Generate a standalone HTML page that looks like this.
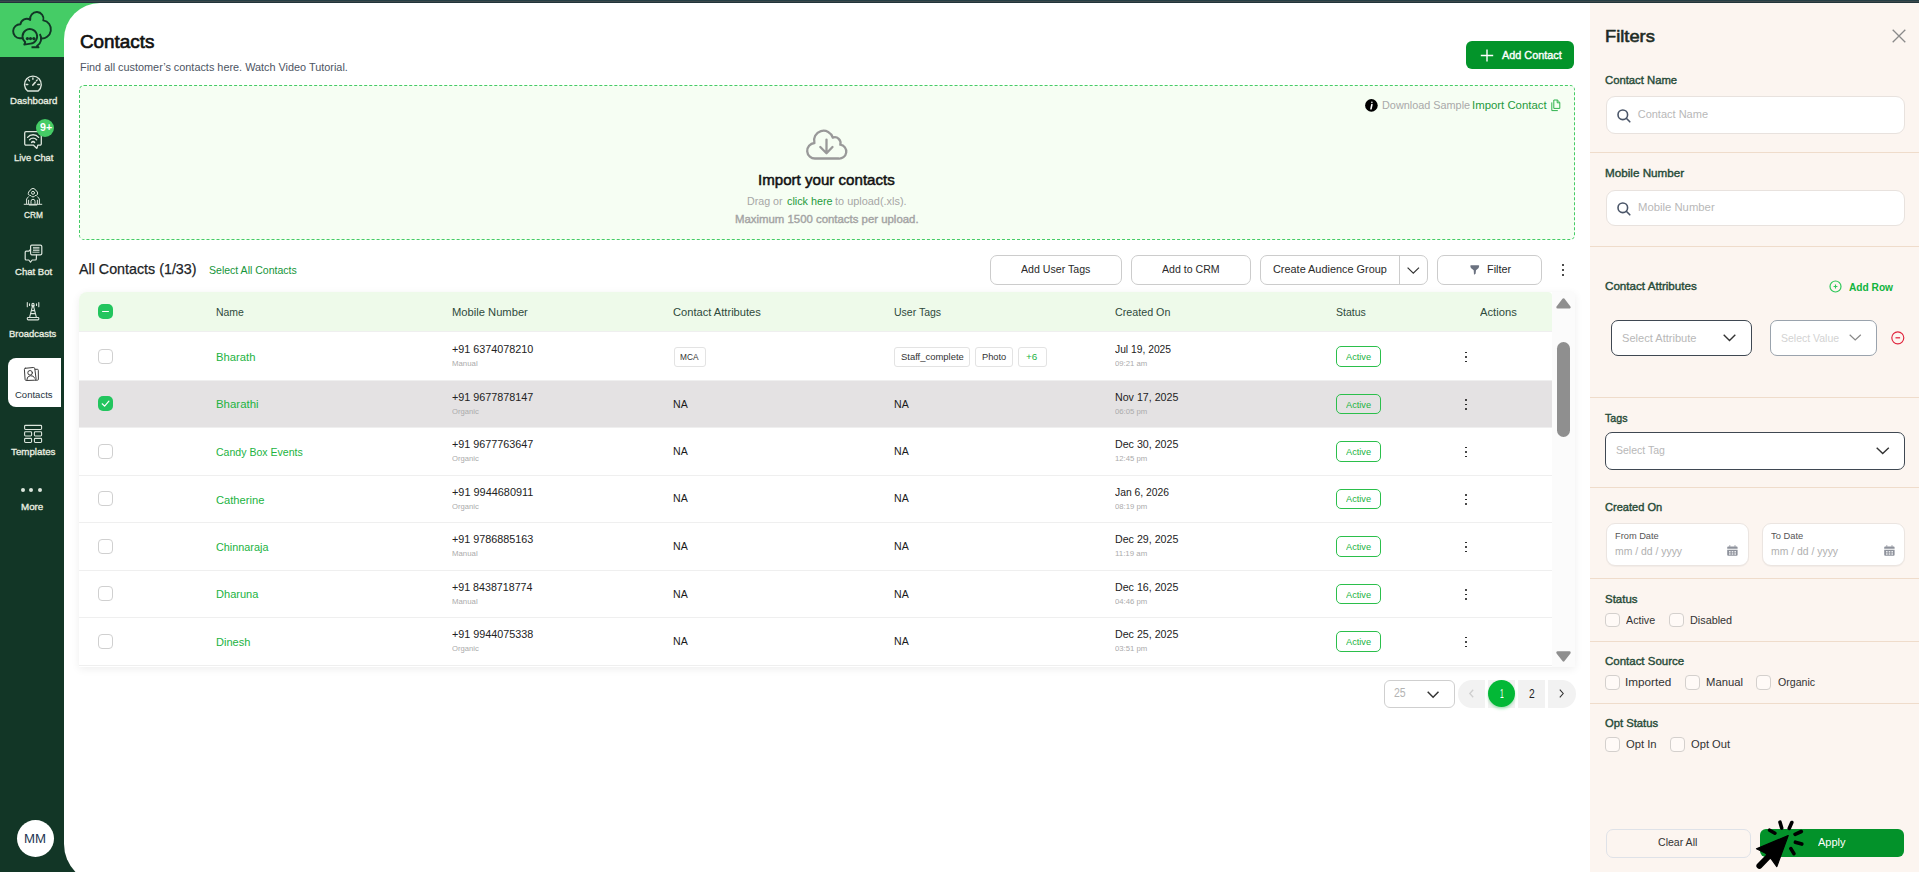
<!DOCTYPE html>
<html><head><meta charset="utf-8"><style>
html,body{margin:0;padding:0;}
body{width:1919px;height:872px;position:relative;overflow:hidden;background:#123626;font-family:"Liberation Sans",sans-serif;}
.t{position:absolute;white-space:nowrap;font-family:"Liberation Sans",sans-serif;}
svg{display:block}
</style></head><body>
<div style="position:absolute;left:0px;top:0px;width:1919px;height:1px;background:#263f45"></div><div style="position:absolute;left:0px;top:1px;width:1919px;height:1px;background:#3d494b"></div><div style="position:absolute;left:0px;top:2px;width:1919px;height:1px;background:#21343a"></div><div style="position:absolute;left:0px;top:3px;width:120px;height:54px;background:#45cc66"></div><div style="position:absolute;left:64px;top:3px;width:1526px;height:881px;background:#ffffff;border-top-left-radius:36px;border-bottom-left-radius:40px"></div><div style="position:absolute;left:1590px;top:3px;width:329px;height:869px;background:#fcf5f0"></div><div style="position:absolute;left:8px;top:358px;width:53px;height:49px;background:#ffffff;border-radius:8px 0 0 8px"></div><div style="position:absolute;left:17px;top:820px;width:37px;height:37px;background:#ffffff;border-radius:50%"></div><div style="position:absolute;left:1466px;top:41px;width:108px;height:28px;background:#03942a;border-radius:6px"></div><div style="position:absolute;left:79px;top:85px;width:1496px;height:155px;background:#f6fef3;border:1px dashed #45cc66;border-radius:5px;box-sizing:border-box"></div><div style="position:absolute;left:990px;top:255px;width:131.5px;height:29.5px;background:#fff;border:1px solid #cccccc;border-radius:7px;box-sizing:border-box"></div><div style="position:absolute;left:1131px;top:255px;width:119.5px;height:29.5px;background:#fff;border:1px solid #cccccc;border-radius:7px;box-sizing:border-box"></div><div style="position:absolute;left:1260px;top:255px;width:168px;height:29.5px;background:#fff;border:1px solid #cccccc;border-radius:7px;box-sizing:border-box"></div><div style="position:absolute;left:1437px;top:255px;width:105px;height:29.5px;background:#fff;border:1px solid #cccccc;border-radius:7px;box-sizing:border-box"></div><div style="position:absolute;left:1398.5px;top:255px;width:1.0px;height:29.5px;background:#cccccc"></div><div style="position:absolute;left:79px;top:291.5px;width:1496px;height:375.0px;background:#ffffff;border-radius:8px 2px 0 0;box-shadow:0 2px 9px rgba(0,0,0,0.07)"></div><div style="position:absolute;left:79px;top:291.5px;width:1473px;height:39.5px;background:#eefaea;border-radius:8px 4px 0 0"></div><div style="position:absolute;left:1552px;top:291.5px;width:23px;height:375.0px;background:#fbfbfb;border-radius:0 2px 0 0"></div><div style="position:absolute;left:79px;top:380px;width:1473px;height:47px;background:#e4e2e3"></div><div style="position:absolute;left:79px;top:331px;width:1473px;height:1px;background:#efefef"></div><div style="position:absolute;left:79px;top:380px;width:1473px;height:1px;background:#efefef"></div><div style="position:absolute;left:79px;top:427px;width:1473px;height:1px;background:#efefef"></div><div style="position:absolute;left:79px;top:475px;width:1473px;height:1px;background:#efefef"></div><div style="position:absolute;left:79px;top:522px;width:1473px;height:1px;background:#efefef"></div><div style="position:absolute;left:79px;top:570px;width:1473px;height:1px;background:#efefef"></div><div style="position:absolute;left:79px;top:617px;width:1473px;height:1px;background:#efefef"></div><div style="position:absolute;left:79px;top:665px;width:1473px;height:1px;background:#efefef"></div><div style="position:absolute;left:98px;top:304px;width:15px;height:15px;background:#22c55e;border-radius:5px"></div><div style="position:absolute;left:102.2px;top:310.7px;width:6.599999999999994px;height:1.1999999999999886px;background:#fff;border-radius:1px"></div><div style="position:absolute;left:98px;top:348.5px;width:15px;height:15.0px;background:#fff;border:1px solid #d0d0d0;border-radius:4px;box-sizing:border-box"></div><div style="position:absolute;left:1336px;top:346px;width:45px;height:20.5px;border:1.3px solid #2bbf4b;border-radius:5px;box-sizing:border-box"></div><div style="position:absolute;left:1465.05px;top:351.55px;width:1.900000000000091px;height:1.8999999999999773px;background:#111;border-radius:50%"></div><div style="position:absolute;left:1465.05px;top:356.05px;width:1.900000000000091px;height:1.8999999999999773px;background:#111;border-radius:50%"></div><div style="position:absolute;left:1465.05px;top:360.55px;width:1.900000000000091px;height:1.8999999999999773px;background:#111;border-radius:50%"></div><div style="position:absolute;left:98px;top:396.0px;width:15px;height:15.0px;background:#22c55e;border-radius:5px"></div><svg style="position:absolute;left:98px;top:396.0px;overflow:visible;" width="15" height="15" viewBox="0 0 15 15"><path d="M4.2 7.8 L6.6 10.1 L10.9 5.2" fill="none" stroke="#fff" stroke-width="1.2" stroke-linecap="round" stroke-linejoin="round"/></svg><div style="position:absolute;left:1336px;top:393.5px;width:45px;height:20.5px;border:1.3px solid #2bbf4b;border-radius:5px;box-sizing:border-box"></div><div style="position:absolute;left:1465.05px;top:399.05px;width:1.900000000000091px;height:1.8999999999999773px;background:#111;border-radius:50%"></div><div style="position:absolute;left:1465.05px;top:403.55px;width:1.900000000000091px;height:1.8999999999999773px;background:#111;border-radius:50%"></div><div style="position:absolute;left:1465.05px;top:408.05px;width:1.900000000000091px;height:1.8999999999999773px;background:#111;border-radius:50%"></div><div style="position:absolute;left:98px;top:443.5px;width:15px;height:15.0px;background:#fff;border:1px solid #d0d0d0;border-radius:4px;box-sizing:border-box"></div><div style="position:absolute;left:1336px;top:441px;width:45px;height:20.5px;border:1.3px solid #2bbf4b;border-radius:5px;box-sizing:border-box"></div><div style="position:absolute;left:1465.05px;top:446.55px;width:1.900000000000091px;height:1.8999999999999773px;background:#111;border-radius:50%"></div><div style="position:absolute;left:1465.05px;top:451.05px;width:1.900000000000091px;height:1.8999999999999773px;background:#111;border-radius:50%"></div><div style="position:absolute;left:1465.05px;top:455.55px;width:1.900000000000091px;height:1.8999999999999773px;background:#111;border-radius:50%"></div><div style="position:absolute;left:98px;top:491.0px;width:15px;height:15.0px;background:#fff;border:1px solid #d0d0d0;border-radius:4px;box-sizing:border-box"></div><div style="position:absolute;left:1336px;top:488.5px;width:45px;height:20.5px;border:1.3px solid #2bbf4b;border-radius:5px;box-sizing:border-box"></div><div style="position:absolute;left:1465.05px;top:494.05px;width:1.900000000000091px;height:1.8999999999999773px;background:#111;border-radius:50%"></div><div style="position:absolute;left:1465.05px;top:498.55px;width:1.900000000000091px;height:1.8999999999999773px;background:#111;border-radius:50%"></div><div style="position:absolute;left:1465.05px;top:503.05px;width:1.900000000000091px;height:1.8999999999999773px;background:#111;border-radius:50%"></div><div style="position:absolute;left:98px;top:538.5px;width:15px;height:15.0px;background:#fff;border:1px solid #d0d0d0;border-radius:4px;box-sizing:border-box"></div><div style="position:absolute;left:1336px;top:536px;width:45px;height:20.5px;border:1.3px solid #2bbf4b;border-radius:5px;box-sizing:border-box"></div><div style="position:absolute;left:1465.05px;top:541.55px;width:1.900000000000091px;height:1.900000000000091px;background:#111;border-radius:50%"></div><div style="position:absolute;left:1465.05px;top:546.05px;width:1.900000000000091px;height:1.900000000000091px;background:#111;border-radius:50%"></div><div style="position:absolute;left:1465.05px;top:550.55px;width:1.900000000000091px;height:1.900000000000091px;background:#111;border-radius:50%"></div><div style="position:absolute;left:98px;top:586.0px;width:15px;height:15.0px;background:#fff;border:1px solid #d0d0d0;border-radius:4px;box-sizing:border-box"></div><div style="position:absolute;left:1336px;top:583.5px;width:45px;height:20.5px;border:1.3px solid #2bbf4b;border-radius:5px;box-sizing:border-box"></div><div style="position:absolute;left:1465.05px;top:589.05px;width:1.900000000000091px;height:1.900000000000091px;background:#111;border-radius:50%"></div><div style="position:absolute;left:1465.05px;top:593.55px;width:1.900000000000091px;height:1.900000000000091px;background:#111;border-radius:50%"></div><div style="position:absolute;left:1465.05px;top:598.05px;width:1.900000000000091px;height:1.900000000000091px;background:#111;border-radius:50%"></div><div style="position:absolute;left:98px;top:633.5px;width:15px;height:15.0px;background:#fff;border:1px solid #d0d0d0;border-radius:4px;box-sizing:border-box"></div><div style="position:absolute;left:1336px;top:631px;width:45px;height:20.5px;border:1.3px solid #2bbf4b;border-radius:5px;box-sizing:border-box"></div><div style="position:absolute;left:1465.05px;top:636.55px;width:1.900000000000091px;height:1.900000000000091px;background:#111;border-radius:50%"></div><div style="position:absolute;left:1465.05px;top:641.05px;width:1.900000000000091px;height:1.900000000000091px;background:#111;border-radius:50%"></div><div style="position:absolute;left:1465.05px;top:645.55px;width:1.900000000000091px;height:1.900000000000091px;background:#111;border-radius:50%"></div><div style="position:absolute;left:673.5px;top:346.5px;width:32.0px;height:20.0px;background:#fff;border:1px solid #e3e3e3;border-radius:3px;box-sizing:border-box"></div><div style="position:absolute;left:894px;top:346.5px;width:75.5px;height:20.0px;background:#fff;border:1px solid #e3e3e3;border-radius:3px;box-sizing:border-box"></div><div style="position:absolute;left:974.5px;top:346.5px;width:38.0px;height:20.0px;background:#fff;border:1px solid #e3e3e3;border-radius:3px;box-sizing:border-box"></div><div style="position:absolute;left:1017.5px;top:346.5px;width:29.0px;height:20.0px;background:#fff;border:1px solid #e3e3e3;border-radius:3px;box-sizing:border-box"></div><div style="position:absolute;left:1557px;top:342px;width:13px;height:95px;background:#8f8f8f;border-radius:7px"></div><svg style="position:absolute;left:1556px;top:298px;overflow:visible;" width="15" height="11" viewBox="0 0 15 11"><path d="M7.5 1.6 L13.4 9.3 L1.6 9.3 Z" fill="#8f8f8f" stroke="#8f8f8f" stroke-width="2.6" stroke-linejoin="round"/></svg><svg style="position:absolute;left:1556px;top:650.5px;overflow:visible;" width="15" height="11" viewBox="0 0 15 11"><path d="M1.6 1.6 L13.4 1.6 L7.5 9.3 Z" fill="#8f8f8f" stroke="#8f8f8f" stroke-width="2.6" stroke-linejoin="round"/></svg><div style="position:absolute;left:1562.25px;top:264.05px;width:2.099999999999909px;height:2.1000000000000227px;background:#111;border-radius:50%"></div><div style="position:absolute;left:1562.25px;top:268.95px;width:2.099999999999909px;height:2.1000000000000227px;background:#111;border-radius:50%"></div><div style="position:absolute;left:1562.25px;top:273.84999999999997px;width:2.099999999999909px;height:2.1000000000000227px;background:#111;border-radius:50%"></div><div style="position:absolute;left:1383.5px;top:679.5px;width:71.5px;height:28.5px;background:#fff;border:1px solid #cfcfcf;border-radius:6px;box-sizing:border-box"></div><svg style="position:absolute;left:1426.8px;top:690.6px;overflow:visible;" width="12.2" height="7" viewBox="0 0 12.2 7"><path d="M0.7 0.7 L6.1 6.2 L11.5 0.7" fill="none" stroke="#333" stroke-width="1.5"/></svg><div style="position:absolute;left:1458px;top:680px;width:118px;height:28px;background:#f2f2f2;border-radius:14px"></div><div style="position:absolute;left:1485.3px;top:680px;width:3.0px;height:28px;background:#fff"></div><div style="position:absolute;left:1515px;top:680px;width:3px;height:28px;background:#fff"></div><div style="position:absolute;left:1545px;top:680px;width:3px;height:28px;background:#fff"></div><div style="position:absolute;left:1488px;top:680px;width:27px;height:27px;background:#03b836;border-radius:50%;box-shadow:0 2px 3px rgba(3,184,54,0.3)"></div><svg style="position:absolute;left:1468.5px;top:689px;overflow:visible;" width="5" height="9" viewBox="0 0 5 9"><path d="M4.2 0.7 L0.8 4.5 L4.2 8.3" fill="none" stroke="#cfcfcf" stroke-width="1.3"/></svg><svg style="position:absolute;left:1559px;top:689px;overflow:visible;" width="5" height="9" viewBox="0 0 5 9"><path d="M0.8 0.7 L4.2 4.5 L0.8 8.3" fill="none" stroke="#333" stroke-width="1.1"/></svg><div style="position:absolute;left:1590px;top:152px;width:329px;height:1px;background:#efdccb"></div><div style="position:absolute;left:1590px;top:245.5px;width:329px;height:1.0px;background:#efdccb"></div><div style="position:absolute;left:1590px;top:397px;width:329px;height:1px;background:#efdccb"></div><div style="position:absolute;left:1590px;top:487px;width:329px;height:1px;background:#efdccb"></div><div style="position:absolute;left:1590px;top:578px;width:329px;height:1px;background:#efdccb"></div><div style="position:absolute;left:1590px;top:641px;width:329px;height:1px;background:#efdccb"></div><div style="position:absolute;left:1590px;top:703px;width:329px;height:1px;background:#efdccb"></div><div style="position:absolute;left:1605.5px;top:96px;width:299.0px;height:37.5px;background:#fff;border:1px solid #e8e2de;border-radius:9px;box-sizing:border-box"></div><div style="position:absolute;left:1605.5px;top:189.5px;width:299.0px;height:36.0px;background:#fff;border:1px solid #e8e2de;border-radius:9px;box-sizing:border-box"></div><div style="position:absolute;left:1611px;top:320px;width:141px;height:36px;background:#fff;border:1.3px solid #3f4852;border-radius:7px;box-sizing:border-box"></div><div style="position:absolute;left:1770px;top:320px;width:106.5px;height:36px;background:#fff;border:1px solid #9aa3ad;border-radius:7px;box-sizing:border-box"></div><div style="position:absolute;left:1605px;top:432px;width:300px;height:37.5px;background:#fff;border:1.3px solid #3f4852;border-radius:7px;box-sizing:border-box"></div><div style="position:absolute;left:1605.5px;top:523px;width:143.0px;height:43px;background:#fff;border:1px solid #ebe5e1;border-radius:9px;box-sizing:border-box;box-shadow:0 1px 1px rgba(0,0,0,0.04)"></div><div style="position:absolute;left:1761.5px;top:523px;width:143.0px;height:43px;background:#fff;border:1px solid #ebe5e1;border-radius:9px;box-sizing:border-box;box-shadow:0 1px 1px rgba(0,0,0,0.04)"></div><div style="position:absolute;left:1605px;top:612.5px;width:14.5px;height:14.5px;background:#fffaf7;border:1px solid #d4d0cd;border-radius:4px;box-sizing:border-box"></div><div style="position:absolute;left:1669.3px;top:612.5px;width:14.5px;height:14.5px;background:#fffaf7;border:1px solid #d4d0cd;border-radius:4px;box-sizing:border-box"></div><div style="position:absolute;left:1605px;top:675px;width:14.5px;height:14.5px;background:#fffaf7;border:1px solid #d4d0cd;border-radius:4px;box-sizing:border-box"></div><div style="position:absolute;left:1685.3px;top:675px;width:14.5px;height:14.5px;background:#fffaf7;border:1px solid #d4d0cd;border-radius:4px;box-sizing:border-box"></div><div style="position:absolute;left:1756.3px;top:675px;width:14.5px;height:14.5px;background:#fffaf7;border:1px solid #d4d0cd;border-radius:4px;box-sizing:border-box"></div><div style="position:absolute;left:1605px;top:737px;width:14.5px;height:14.5px;background:#fffaf7;border:1px solid #d4d0cd;border-radius:4px;box-sizing:border-box"></div><div style="position:absolute;left:1670px;top:737px;width:14.5px;height:14.5px;background:#fffaf7;border:1px solid #d4d0cd;border-radius:4px;box-sizing:border-box"></div><div style="position:absolute;left:1605.5px;top:828.5px;width:145.0px;height:29.0px;border:1px solid #dfe2e8;border-radius:7px;box-sizing:border-box"></div><div style="position:absolute;left:1759.5px;top:829px;width:144.5px;height:28px;background:#03922a;border-radius:6px"></div><svg style="position:absolute;left:8px;top:8px;overflow:visible;" width="48" height="44" viewBox="0 0 48 44"><g fill="none" stroke="#123626" stroke-width="1.9" stroke-linejoin="round">
<path d="M15.2 30.3 L11.9 30.3 A6.9 6.9 0 0 1 12.4 16.3 A6.4 6.4 0 0 1 22.2 11.9 A6.7 6.7 0 1 1 35.3 12.4 A8.5 8.5 0 0 1 32.4 30.3"/>
<path d="M17.2 34.0 A7.3 7.3 0 1 1 22.5 35.6 L16.3 36.6 Z"/>
<path d="M31.8 26.0 A8.5 8.5 0 0 1 29.0 38.0 L30.5 39.3 L23.5 39.3"/>
</g>
<g fill="#123626"><circle cx="19.4" cy="30.6" r="1.6"/><circle cx="22.5" cy="30.6" r="1.6"/><circle cx="25.8" cy="30.6" r="1.6"/></g></svg><svg style="position:absolute;left:20px;top:70px;overflow:visible;" width="28" height="26" viewBox="0 0 28 26"><g fill="none" stroke="#dce5dc" stroke-width="1.4" stroke-linecap="round">
<path d="M7.6 21.0 A8.4 8.4 0 1 1 18.2 21.0 Z" stroke-linejoin="round"/>
<path d="M6.2 14.5 L7.8 14.5 M17.8 14.5 L19.4 14.5 M12.9 8.0 L12.9 9.2 M8.5 9.8 L9.5 10.7 M17.2 10.0 L16.4 10.7"/>
<path d="M12.9 15.0 L15.3 12.3" stroke-width="1.7"/>
</g></svg><svg style="position:absolute;left:20px;top:116px;overflow:visible;" width="38" height="36" viewBox="0 0 38 36"><g fill="none" stroke="#dce5dc" stroke-width="1.3" stroke-linecap="round" stroke-linejoin="round">
<path d="M6.0 15.7 L20.0 15.7 A1.3 1.3 0 0 1 21.3 17.0 L21.3 27.8 A1.3 1.3 0 0 1 20.0 29.1 L17.8 29.1 L16.9 32.4 L13.3 29.1 L6.0 29.1 A1.3 1.3 0 0 1 4.7 27.8 L4.7 17.0 A1.3 1.3 0 0 1 6.0 15.7 Z"/>
<path d="M7.6 21.4 A7 7 0 0 1 18.6 21.4"/>
<path d="M9.5 23.8 A4.6 4.6 0 0 1 16.7 23.8"/>
<path d="M11.7 26.4 A1.7 1.7 0 0 1 14.5 26.4" stroke-width="1.6"/>
</g></svg><div style="position:absolute;left:36px;top:119px;width:18px;height:18px;background:#45cc66;border-radius:50%"></div><svg style="position:absolute;left:20px;top:184px;overflow:visible;" width="26" height="26" viewBox="0 0 26 26"><g fill="none" stroke="#dce5dc" stroke-width="1.0" stroke-linecap="round" stroke-linejoin="round">
<path d="M8.4 9.0 L8.9 7.4 L10.2 6.6 L11.2 5.0 L13 4.4 L14.8 5.0 L15.8 6.6 L17.1 7.4 L17.6 9.0 L17.4 10.6 L16.2 11.4 L15.0 11.6 A2.2 2.2 0 0 1 11.0 11.6 L9.8 11.4 L8.6 10.6 Z"/>
<circle cx="13" cy="8.8" r="1.5"/>
<path d="M6.6 19.6 L6.6 15.0 L8.4 12.8 M8.6 19.6 L8.6 16.2 M19.4 19.6 L19.4 15.0 L17.6 12.8 M17.4 19.6 L17.4 16.2"/>
<path d="M11.0 19.4 L11.0 17.3 A2 2 0 0 1 15.0 17.3 L15.0 19.4"/>
<path d="M4.2 20.3 L21.8 20.3"/>
<path d="M9.4 20.9 L16.6 20.9" stroke-width="1.3"/>
</g></svg><svg style="position:absolute;left:20px;top:240px;overflow:visible;" width="26" height="26" viewBox="0 0 26 26"><g fill="none" stroke="#dce5dc" stroke-width="1.2" stroke-linecap="round" stroke-linejoin="round">
<path d="M11.7 5.2 L20.4 5.2 A1.4 1.4 0 0 1 21.8 6.6 L21.8 13.4 A1.4 1.4 0 0 1 20.4 14.8 L16.5 14.8 L16.3 19.0 A1 1 0 0 1 15.3 20 L12.2 20 L10.5 22.2 L8.8 20 L6.2 20 A1 1 0 0 1 5.2 19 L5.2 12.2 A1 1 0 0 1 6.2 11.2 L8.8 11.2 L10.6 9.5 L10.6 6.3 A1.1 1.1 0 0 1 11.7 5.2 Z"/>
<path d="M10.6 9.5 L10.6 13.6 A1.2 1.2 0 0 0 11.8 14.8 L16.5 14.8"/>
<path d="M13.4 7.4 L19.1 7.4 M13.4 8.9 L19.1 8.9 M13.4 10.4 L19.1 10.4 M12.8 12.2 L19.1 12.2" stroke-width="0.9"/>
</g></svg><svg style="position:absolute;left:20px;top:298px;overflow:visible;" width="26" height="26" viewBox="0 0 26 26"><g fill="none" stroke="#dce5dc" stroke-width="1.1" stroke-linecap="round" stroke-linejoin="round">
<path d="M7.3 4.5 L7.3 8.8 M18.8 4.5 L18.8 8.8 M9.5 5.7 L9.5 7.5 M16.5 5.7 L16.5 7.5"/>
<circle cx="13" cy="6.5" r="1.1"/>
<path d="M11.8 7.6 L12.4 8.6 L13.6 8.6 L14.2 7.6" />
<path d="M12.3 8.8 L9.6 19.3 M13.7 8.8 L16.4 19.3 M11.3 12.6 L14.7 12.6 M10.5 15.6 L15.5 15.6"/>
<rect x="7.3" y="19.5" width="11.5" height="2.4" rx="0.8"/>
</g></svg><svg style="position:absolute;left:18px;top:362px;overflow:visible;" width="26" height="26" viewBox="0 0 26 26"><g fill="none" stroke="#3a3a3a" stroke-width="1.0" stroke-linecap="round" stroke-linejoin="round">
<path d="M17.3 7.3 L19.4 7.3 A0.9 0.9 0 0 1 20.3 8.2 L20.4 17.3 A0.9 0.9 0 0 1 19.5 18.2 L17.5 18.2"/>
<path d="M7.2 6.3 L15.3 5.5 A1.4 1.4 0 0 1 16.8 6.8 L18.1 16.8 A1.3 1.3 0 0 1 16.8 18.2 L8.2 18.5 A1.2 1.2 0 0 1 7.1 17.5 L6.4 7.5 A1.2 1.2 0 0 1 7.2 6.3 Z"/>
<circle cx="12.1" cy="10.8" r="2.3"/>
<path d="M8.8 17.8 A4.2 4.2 0 0 1 16.9 16.3"/>
</g></svg><svg style="position:absolute;left:20px;top:420px;overflow:visible;" width="26" height="26" viewBox="0 0 26 26"><g fill="none" stroke="#dce5dc" stroke-width="1.1">
<rect x="4.6" y="5.4" width="17" height="4.1" rx="0.9"/>
<rect x="4.6" y="11.8" width="7" height="4.2" rx="0.9"/>
<rect x="14.4" y="11.8" width="7.2" height="4.2" rx="0.9"/>
<rect x="4.6" y="18.4" width="7" height="4.1" rx="0.9"/>
<rect x="14.4" y="18.4" width="7.2" height="4.1" rx="0.9"/>
</g></svg><div style="position:absolute;left:21px;top:488px;width:4px;height:4px;background:#dce5dc;border-radius:50%"></div><div style="position:absolute;left:29.2px;top:488px;width:4.0000000000000036px;height:4px;background:#dce5dc;border-radius:50%"></div><div style="position:absolute;left:37.6px;top:488px;width:4.0px;height:4px;background:#dce5dc;border-radius:50%"></div><svg style="position:absolute;left:1480px;top:48.5px;overflow:visible;" width="14" height="13" viewBox="0 0 14 13"><path d="M7 0.5 L7 12.5 M0.8 6.5 L13.2 6.5" stroke="#fff" stroke-width="1.4"/></svg><svg style="position:absolute;left:1365px;top:99px;overflow:visible;" width="13" height="13" viewBox="0 0 13 13"><circle cx="6.4" cy="6.4" r="6.3" fill="#000"/><path d="M6.9 3.2 L6.9 3.3 M6.9 5.5 L6.0 9.8" stroke="#fff" stroke-width="1.6" stroke-linecap="round"/></svg><svg style="position:absolute;left:1550px;top:98.5px;overflow:visible;" width="12" height="13" viewBox="0 0 12 13"><g fill="none" stroke="#2fb24e" stroke-width="1"><path d="M3.8 1.0 L7.4 1.0 L9.8 3.4 L9.8 9.4 L3.8 9.4 Z"/><path d="M1.8 3.4 L1.8 11.6 L7.8 11.6"/><path d="M7.2 1.0 L7.2 3.8 L9.8 3.8"/></g></svg><svg style="position:absolute;left:800px;top:122px;overflow:visible;" width="52" height="44" viewBox="0 0 52 44"><g fill="none" stroke="#999" stroke-width="2.3" stroke-linecap="round" stroke-linejoin="round">
<path d="M15.5 36.5 A7.2 7.2 0 0 1 14.4 21.0 A9.3 9.3 0 0 1 32.8 15.6 A5.8 5.8 0 0 1 40.3 22.7 A6.7 6.7 0 0 1 38.3 36.5 Z"/>
<path d="M26.5 17.6 L26.5 31.0 M20.3 25.0 L26.5 31.2 L32.5 25.0"/>
</g></svg><svg style="position:absolute;left:1406.5px;top:266.5px;overflow:visible;" width="13" height="7" viewBox="0 0 13 7"><path d="M0.6 0.6 L6.3 6.2 L12 0.6" fill="none" stroke="#333" stroke-width="1.2"/></svg><svg style="position:absolute;left:1469.5px;top:264.8px;overflow:visible;" width="10" height="10" viewBox="0 0 10 10"><path d="M0.3 1.1 A0.8 0.8 0 0 1 1.1 0.2 L8.4 0.2 A0.8 0.8 0 0 1 9.2 1.1 L8.6 2.9 L6.0 5.2 L5.6 8.8 L4.0 9.8 L3.7 5.3 L0.9 2.9 Z" fill="#6b7280"/></svg><svg style="position:absolute;left:1892px;top:29px;overflow:visible;" width="14" height="14" viewBox="0 0 14 14"><path d="M0.7 0.7 L13.3 13.3 M13.3 0.7 L0.7 13.3" stroke="#8a8a8a" stroke-width="1.3"/></svg><svg style="position:absolute;left:1616px;top:107.5px;overflow:visible;" width="16" height="15" viewBox="0 0 16 15"><g fill="none" stroke="#4a5568" stroke-width="1.6" stroke-linecap="round"><circle cx="6.8" cy="6.8" r="4.8"/><path d="M10.3 10.3 L13.8 13.8"/></g></svg><svg style="position:absolute;left:1616px;top:200.5px;overflow:visible;" width="16" height="15" viewBox="0 0 16 15"><g fill="none" stroke="#4a5568" stroke-width="1.6" stroke-linecap="round"><circle cx="6.8" cy="6.8" r="4.8"/><path d="M10.3 10.3 L13.8 13.8"/></g></svg><svg style="position:absolute;left:1829px;top:280.3px;overflow:visible;" width="13" height="13" viewBox="0 0 13 13"><g fill="none" stroke="#2ec85a" stroke-width="1.2"><circle cx="6.5" cy="6.5" r="5.5"/></g><path d="M6.5 4.6 L6.5 8.4 M4.6 6.5 L8.4 6.5" stroke="#2ec85a" stroke-width="1.1"/></svg><svg style="position:absolute;left:1890.5px;top:331.3px;overflow:visible;" width="14" height="14" viewBox="0 0 14 14"><circle cx="6.8" cy="6.8" r="6" fill="none" stroke="#e0243d" stroke-width="1.15"/><path d="M4.5 6.8 L9.1 6.8" stroke="#e0243d" stroke-width="1.25"/></svg><svg style="position:absolute;left:1723.3px;top:333.5px;overflow:visible;" width="13" height="7.5" viewBox="0 0 13 7.5"><path d="M0.7 0.7 L6.5 6.5 L12.3 0.7" fill="none" stroke="#333" stroke-width="1.4"/></svg><svg style="position:absolute;left:1848.8px;top:334px;overflow:visible;" width="12.5" height="7" viewBox="0 0 12.5 7"><path d="M0.7 0.7 L6.2 6.0 L11.8 0.7" fill="none" stroke="#888" stroke-width="1.2"/></svg><svg style="position:absolute;left:1876px;top:447px;overflow:visible;" width="13.5" height="7.5" viewBox="0 0 13.5 7.5"><path d="M0.7 0.7 L6.7 6.5 L12.8 0.7" fill="none" stroke="#333" stroke-width="1.4"/></svg><svg style="position:absolute;left:1727.2px;top:545px;overflow:visible;" width="11" height="11" viewBox="0 0 11 11"><path d="M1.2 1.6 L9.6 1.6 A1 1 0 0 1 10.6 2.6 L10.6 3.8 L0.2 3.8 L0.2 2.6 A1 1 0 0 1 1.2 1.6 Z M0.2 4.8 L10.6 4.8 L10.6 9.8 A1 1 0 0 1 9.6 10.8 L1.2 10.8 A1 1 0 0 1 0.2 9.8 Z" fill="#8e929c"/><path d="M2.8 0.2 L2.8 1.8 M8.0 0.2 L8.0 1.8" stroke="#8e929c" stroke-width="0.9"/><g fill="#fff"><rect x="2" y="6.2" width="1.6" height="1.2"/><rect x="4.7" y="6.2" width="1.6" height="1.2"/><rect x="7.4" y="6.2" width="1.6" height="1.2"/><rect x="2" y="8.4" width="1.6" height="1.2"/><rect x="4.7" y="8.4" width="1.6" height="1.2"/><rect x="7.4" y="8.4" width="1.6" height="1.2"/></g></svg><svg style="position:absolute;left:1883.5px;top:545px;overflow:visible;" width="11" height="11" viewBox="0 0 11 11"><path d="M1.2 1.6 L9.6 1.6 A1 1 0 0 1 10.6 2.6 L10.6 3.8 L0.2 3.8 L0.2 2.6 A1 1 0 0 1 1.2 1.6 Z M0.2 4.8 L10.6 4.8 L10.6 9.8 A1 1 0 0 1 9.6 10.8 L1.2 10.8 A1 1 0 0 1 0.2 9.8 Z" fill="#8e929c"/><path d="M2.8 0.2 L2.8 1.8 M8.0 0.2 L8.0 1.8" stroke="#8e929c" stroke-width="0.9"/><g fill="#fff"><rect x="2" y="6.2" width="1.6" height="1.2"/><rect x="4.7" y="6.2" width="1.6" height="1.2"/><rect x="7.4" y="6.2" width="1.6" height="1.2"/><rect x="2" y="8.4" width="1.6" height="1.2"/><rect x="4.7" y="8.4" width="1.6" height="1.2"/><rect x="7.4" y="8.4" width="1.6" height="1.2"/></g></svg>
<div class="t" style="left:9.90px;top:96.00px;font-size:9.5px;line-height:9.5px;color:#e9eee0;font-weight:normal;transform:scaleX(1.0175);transform-origin:0 0;-webkit-text-stroke:0.32px #e9eee0;">Dashboard</div><div class="t" style="left:13.95px;top:153.00px;font-size:9.5px;line-height:9.5px;color:#e9eee0;font-weight:normal;transform:scaleX(0.9804);transform-origin:0 0;-webkit-text-stroke:0.32px #e9eee0;">Live Chat</div><div class="t" style="left:24.00px;top:210.00px;font-size:9.5px;line-height:9.5px;color:#e9eee0;font-weight:normal;transform:scaleX(0.8747);transform-origin:0 0;-webkit-text-stroke:0.32px #e9eee0;">CRM</div><div class="t" style="left:14.75px;top:267.00px;font-size:9.5px;line-height:9.5px;color:#e9eee0;font-weight:normal;transform:scaleX(1.0047);transform-origin:0 0;-webkit-text-stroke:0.32px #e9eee0;">Chat Bot</div><div class="t" style="left:9.45px;top:329.00px;font-size:9.5px;line-height:9.5px;color:#e9eee0;font-weight:normal;transform:scaleX(0.9943);transform-origin:0 0;-webkit-text-stroke:0.32px #e9eee0;">Broadcasts</div><div class="t" style="left:14.65px;top:390.00px;font-size:9.7px;line-height:9.7px;color:#1d3340;font-weight:normal;transform:scaleX(0.9821);transform-origin:0 0;">Contacts</div><div class="t" style="left:11.25px;top:447.00px;font-size:9.5px;line-height:9.5px;color:#e9eee0;font-weight:normal;transform:scaleX(1.0265);transform-origin:0 0;-webkit-text-stroke:0.32px #e9eee0;">Templates</div><div class="t" style="left:21.00px;top:502.00px;font-size:9.5px;line-height:9.5px;color:#e9eee0;font-weight:normal;transform:scaleX(1.0299);transform-origin:0 0;-webkit-text-stroke:0.32px #e9eee0;">More</div><div class="t" style="left:24.20px;top:833.00px;font-size:12px;line-height:12px;color:#1c3550;font-weight:normal;transform:scaleX(1.1002);transform-origin:0 0;">MM</div><div class="t" style="left:39.70px;top:122.00px;font-size:10.5px;line-height:10.5px;color:#ffffff;font-weight:bold;transform:scaleX(1.0135);transform-origin:0 0;">9+</div><div class="t" style="left:79.50px;top:33.00px;font-size:18px;line-height:18px;color:#111111;font-weight:normal;transform:scaleX(1.0474);transform-origin:0 0;-webkit-text-stroke:0.61px #111111;">Contacts</div><div class="t" style="left:79.50px;top:62.00px;font-size:11px;line-height:11px;color:#4d5563;font-weight:normal;transform:scaleX(0.9882);transform-origin:0 0;">Find all customer’s contacts here. Watch Video Tutorial.</div><div class="t" style="left:1502.00px;top:50.00px;font-size:11px;line-height:11px;color:#ffffff;font-weight:normal;transform:scaleX(0.9854);transform-origin:0 0;-webkit-text-stroke:0.37px #ffffff;">Add Contact</div><div class="t" style="left:1382.00px;top:100.00px;font-size:11px;line-height:11px;color:#a9a9a9;font-weight:normal;transform:scaleX(0.9870);transform-origin:0 0;">Download Sample</div><div class="t" style="left:1472.47px;top:100.00px;font-size:11px;line-height:11px;color:#1f9a3c;font-weight:normal;transform:scaleX(1.0340);transform-origin:0 0;">Import Contact</div><div class="t" style="left:758.21px;top:173.00px;font-size:14.5px;line-height:14.5px;color:#111111;font-weight:normal;transform:scaleX(1.0415);transform-origin:0 0;-webkit-text-stroke:0.49px #111111;">Import your contacts</div><div class="t" style="left:747.20px;top:196.00px;font-size:11px;line-height:11px;color:#a6a6a6;font-weight:normal;transform:scaleX(0.9698);transform-origin:0 0;">Drag or</div><div class="t" style="left:786.50px;top:196.00px;font-size:11px;line-height:11px;color:#1f9a3c;font-weight:normal;transform:scaleX(0.9818);transform-origin:0 0;">click here</div><div class="t" style="left:835.00px;top:196.00px;font-size:11px;line-height:11px;color:#a6a6a6;font-weight:normal;transform:scaleX(0.9918);transform-origin:0 0;">to upload(.xls).</div><div class="t" style="left:735.25px;top:214.00px;font-size:11px;line-height:11px;color:#a3a3a3;font-weight:normal;transform:scaleX(1.0352);transform-origin:0 0;-webkit-text-stroke:0.37px #a3a3a3;">Maximum 1500 contacts per upload.</div><div class="t" style="left:78.70px;top:261.00px;font-size:15px;line-height:15px;color:#1c2326;font-weight:normal;transform:scaleX(0.9523);transform-origin:0 0;-webkit-text-stroke:0.25px #1c2326;">All Contacts (1/33)</div><div class="t" style="left:208.60px;top:265.00px;font-size:11.5px;line-height:11.5px;color:#16953a;font-weight:normal;transform:scaleX(0.9156);transform-origin:0 0;">Select All Contacts</div><div class="t" style="left:1021.00px;top:264.00px;font-size:11px;line-height:11px;color:#2a2a2a;font-weight:normal;transform:scaleX(0.9636);transform-origin:0 0;">Add User Tags</div><div class="t" style="left:1161.75px;top:264.00px;font-size:11px;line-height:11px;color:#2a2a2a;font-weight:normal;transform:scaleX(0.9624);transform-origin:0 0;">Add to CRM</div><div class="t" style="left:1272.65px;top:264.00px;font-size:11px;line-height:11px;color:#2a2a2a;font-weight:normal;transform:scaleX(0.9900);transform-origin:0 0;">Create Audience Group</div><div class="t" style="left:1486.80px;top:264.00px;font-size:11px;line-height:11px;color:#2a2a2a;font-weight:normal;transform:scaleX(0.9887);transform-origin:0 0;">Filter</div><div class="t" style="left:216.00px;top:307.00px;font-size:11.5px;line-height:11.5px;color:#2e4a3c;font-weight:normal;transform:scaleX(0.9082);transform-origin:0 0;">Name</div><div class="t" style="left:452.00px;top:307.00px;font-size:11.5px;line-height:11.5px;color:#2e4a3c;font-weight:normal;transform:scaleX(0.9726);transform-origin:0 0;">Mobile Number</div><div class="t" style="left:673.00px;top:307.00px;font-size:11.5px;line-height:11.5px;color:#2e4a3c;font-weight:normal;transform:scaleX(0.9678);transform-origin:0 0;">Contact Attributes</div><div class="t" style="left:894.00px;top:307.00px;font-size:11.5px;line-height:11.5px;color:#2e4a3c;font-weight:normal;transform:scaleX(0.9132);transform-origin:0 0;">User Tags</div><div class="t" style="left:1115.00px;top:307.00px;font-size:11.5px;line-height:11.5px;color:#2e4a3c;font-weight:normal;transform:scaleX(0.9314);transform-origin:0 0;">Created On</div><div class="t" style="left:1336.00px;top:307.00px;font-size:11.5px;line-height:11.5px;color:#2e4a3c;font-weight:normal;transform:scaleX(0.9132);transform-origin:0 0;">Status</div><div class="t" style="left:1480.00px;top:307.00px;font-size:11.5px;line-height:11.5px;color:#2e4a3c;font-weight:normal;transform:scaleX(0.9747);transform-origin:0 0;">Actions</div><div class="t" style="left:216.00px;top:352.00px;font-size:11.5px;line-height:11.5px;color:#22b33f;font-weight:normal;transform:scaleX(0.9779);transform-origin:0 0;">Bharath</div><div class="t" style="left:452.00px;top:344.00px;font-size:11.5px;line-height:11.5px;color:#222222;font-weight:normal;transform:scaleX(0.9390);transform-origin:0 0;">+91 6374078210</div><div class="t" style="left:452.00px;top:360.00px;font-size:7.5px;line-height:7.5px;color:#ababab;font-weight:normal;transform:scaleX(1.0428);transform-origin:0 0;">Manual</div><div class="t" style="left:1115.00px;top:344.00px;font-size:11.5px;line-height:11.5px;color:#222222;font-weight:normal;transform:scaleX(0.8946);transform-origin:0 0;">Jul 19, 2025</div><div class="t" style="left:1115.00px;top:360.00px;font-size:7.5px;line-height:7.5px;color:#ababab;font-weight:normal;transform:scaleX(1.0315);transform-origin:0 0;">09:21 am</div><div class="t" style="left:1346.00px;top:352.00px;font-size:9.5px;line-height:9.5px;color:#22b33f;font-weight:normal;transform:scaleX(0.9693);transform-origin:0 0;">Active</div><div class="t" style="left:216.00px;top:399.00px;font-size:11.5px;line-height:11.5px;color:#22b33f;font-weight:normal;transform:scaleX(0.9934);transform-origin:0 0;">Bharathi</div><div class="t" style="left:452.00px;top:392.00px;font-size:11.5px;line-height:11.5px;color:#222222;font-weight:normal;transform:scaleX(0.9390);transform-origin:0 0;">+91 9677878147</div><div class="t" style="left:452.00px;top:408.00px;font-size:7.5px;line-height:7.5px;color:#ababab;font-weight:normal;transform:scaleX(1.0184);transform-origin:0 0;">Organic</div><div class="t" style="left:1115.00px;top:392.00px;font-size:11.5px;line-height:11.5px;color:#222222;font-weight:normal;transform:scaleX(0.9263);transform-origin:0 0;">Nov 17, 2025</div><div class="t" style="left:1115.00px;top:408.00px;font-size:7.5px;line-height:7.5px;color:#ababab;font-weight:normal;transform:scaleX(1.0315);transform-origin:0 0;">06:05 pm</div><div class="t" style="left:673.00px;top:399.00px;font-size:11.5px;line-height:11.5px;color:#1a1a1a;font-weight:normal;transform:scaleX(0.9200);transform-origin:0 0;">NA</div><div class="t" style="left:894.00px;top:399.00px;font-size:11.5px;line-height:11.5px;color:#1a1a1a;font-weight:normal;transform:scaleX(0.9200);transform-origin:0 0;">NA</div><div class="t" style="left:1346.00px;top:400.00px;font-size:9.5px;line-height:9.5px;color:#22b33f;font-weight:normal;transform:scaleX(0.9693);transform-origin:0 0;">Active</div><div class="t" style="left:216.00px;top:447.00px;font-size:11.5px;line-height:11.5px;color:#22b33f;font-weight:normal;transform:scaleX(0.9172);transform-origin:0 0;">Candy Box Events</div><div class="t" style="left:452.00px;top:439.00px;font-size:11.5px;line-height:11.5px;color:#222222;font-weight:normal;transform:scaleX(0.9390);transform-origin:0 0;">+91 9677763647</div><div class="t" style="left:452.00px;top:455.00px;font-size:7.5px;line-height:7.5px;color:#ababab;font-weight:normal;transform:scaleX(1.0184);transform-origin:0 0;">Organic</div><div class="t" style="left:1115.00px;top:439.00px;font-size:11.5px;line-height:11.5px;color:#222222;font-weight:normal;transform:scaleX(0.9263);transform-origin:0 0;">Dec 30, 2025</div><div class="t" style="left:1115.00px;top:455.00px;font-size:7.5px;line-height:7.5px;color:#ababab;font-weight:normal;transform:scaleX(1.0315);transform-origin:0 0;">12:45 pm</div><div class="t" style="left:673.00px;top:446.00px;font-size:11.5px;line-height:11.5px;color:#1a1a1a;font-weight:normal;transform:scaleX(0.9200);transform-origin:0 0;">NA</div><div class="t" style="left:894.00px;top:446.00px;font-size:11.5px;line-height:11.5px;color:#1a1a1a;font-weight:normal;transform:scaleX(0.9200);transform-origin:0 0;">NA</div><div class="t" style="left:1346.00px;top:447.00px;font-size:9.5px;line-height:9.5px;color:#22b33f;font-weight:normal;transform:scaleX(0.9693);transform-origin:0 0;">Active</div><div class="t" style="left:216.00px;top:495.00px;font-size:11.5px;line-height:11.5px;color:#22b33f;font-weight:normal;transform:scaleX(0.9703);transform-origin:0 0;">Catherine</div><div class="t" style="left:452.00px;top:487.00px;font-size:11.5px;line-height:11.5px;color:#222222;font-weight:normal;transform:scaleX(0.9484);transform-origin:0 0;">+91 9944680911</div><div class="t" style="left:452.00px;top:503.00px;font-size:7.5px;line-height:7.5px;color:#ababab;font-weight:normal;transform:scaleX(1.0184);transform-origin:0 0;">Organic</div><div class="t" style="left:1115.00px;top:487.00px;font-size:11.5px;line-height:11.5px;color:#222222;font-weight:normal;transform:scaleX(0.8994);transform-origin:0 0;">Jan 6, 2026</div><div class="t" style="left:1115.00px;top:503.00px;font-size:7.5px;line-height:7.5px;color:#ababab;font-weight:normal;transform:scaleX(1.0315);transform-origin:0 0;">08:19 pm</div><div class="t" style="left:673.00px;top:493.00px;font-size:11.5px;line-height:11.5px;color:#1a1a1a;font-weight:normal;transform:scaleX(0.9200);transform-origin:0 0;">NA</div><div class="t" style="left:894.00px;top:493.00px;font-size:11.5px;line-height:11.5px;color:#1a1a1a;font-weight:normal;transform:scaleX(0.9200);transform-origin:0 0;">NA</div><div class="t" style="left:1346.00px;top:494.00px;font-size:9.5px;line-height:9.5px;color:#22b33f;font-weight:normal;transform:scaleX(0.9693);transform-origin:0 0;">Active</div><div class="t" style="left:216.00px;top:542.00px;font-size:11.5px;line-height:11.5px;color:#22b33f;font-weight:normal;transform:scaleX(0.9427);transform-origin:0 0;">Chinnaraja</div><div class="t" style="left:452.00px;top:534.00px;font-size:11.5px;line-height:11.5px;color:#222222;font-weight:normal;transform:scaleX(0.9390);transform-origin:0 0;">+91 9786885163</div><div class="t" style="left:452.00px;top:550.00px;font-size:7.5px;line-height:7.5px;color:#ababab;font-weight:normal;transform:scaleX(1.0428);transform-origin:0 0;">Manual</div><div class="t" style="left:1115.00px;top:534.00px;font-size:11.5px;line-height:11.5px;color:#222222;font-weight:normal;transform:scaleX(0.9263);transform-origin:0 0;">Dec 29, 2025</div><div class="t" style="left:1115.00px;top:550.00px;font-size:7.5px;line-height:7.5px;color:#ababab;font-weight:normal;transform:scaleX(1.0503);transform-origin:0 0;">11:19 am</div><div class="t" style="left:673.00px;top:541.00px;font-size:11.5px;line-height:11.5px;color:#1a1a1a;font-weight:normal;transform:scaleX(0.9200);transform-origin:0 0;">NA</div><div class="t" style="left:894.00px;top:541.00px;font-size:11.5px;line-height:11.5px;color:#1a1a1a;font-weight:normal;transform:scaleX(0.9200);transform-origin:0 0;">NA</div><div class="t" style="left:1346.00px;top:542.00px;font-size:9.5px;line-height:9.5px;color:#22b33f;font-weight:normal;transform:scaleX(0.9693);transform-origin:0 0;">Active</div><div class="t" style="left:216.00px;top:589.00px;font-size:11.5px;line-height:11.5px;color:#22b33f;font-weight:normal;transform:scaleX(0.9616);transform-origin:0 0;">Dharuna</div><div class="t" style="left:452.00px;top:582.00px;font-size:11.5px;line-height:11.5px;color:#222222;font-weight:normal;transform:scaleX(0.9282);transform-origin:0 0;">+91 8438718774</div><div class="t" style="left:452.00px;top:598.00px;font-size:7.5px;line-height:7.5px;color:#ababab;font-weight:normal;transform:scaleX(1.0428);transform-origin:0 0;">Manual</div><div class="t" style="left:1115.00px;top:582.00px;font-size:11.5px;line-height:11.5px;color:#222222;font-weight:normal;transform:scaleX(0.9263);transform-origin:0 0;">Dec 16, 2025</div><div class="t" style="left:1115.00px;top:598.00px;font-size:7.5px;line-height:7.5px;color:#ababab;font-weight:normal;transform:scaleX(1.0315);transform-origin:0 0;">04:46 pm</div><div class="t" style="left:673.00px;top:589.00px;font-size:11.5px;line-height:11.5px;color:#1a1a1a;font-weight:normal;transform:scaleX(0.9200);transform-origin:0 0;">NA</div><div class="t" style="left:894.00px;top:589.00px;font-size:11.5px;line-height:11.5px;color:#1a1a1a;font-weight:normal;transform:scaleX(0.9200);transform-origin:0 0;">NA</div><div class="t" style="left:1346.00px;top:590.00px;font-size:9.5px;line-height:9.5px;color:#22b33f;font-weight:normal;transform:scaleX(0.9693);transform-origin:0 0;">Active</div><div class="t" style="left:216.00px;top:637.00px;font-size:11.5px;line-height:11.5px;color:#22b33f;font-weight:normal;transform:scaleX(0.9604);transform-origin:0 0;">Dinesh</div><div class="t" style="left:452.00px;top:629.00px;font-size:11.5px;line-height:11.5px;color:#222222;font-weight:normal;transform:scaleX(0.9390);transform-origin:0 0;">+91 9944075338</div><div class="t" style="left:452.00px;top:645.00px;font-size:7.5px;line-height:7.5px;color:#ababab;font-weight:normal;transform:scaleX(1.0184);transform-origin:0 0;">Organic</div><div class="t" style="left:1115.00px;top:629.00px;font-size:11.5px;line-height:11.5px;color:#222222;font-weight:normal;transform:scaleX(0.9263);transform-origin:0 0;">Dec 25, 2025</div><div class="t" style="left:1115.00px;top:645.00px;font-size:7.5px;line-height:7.5px;color:#ababab;font-weight:normal;transform:scaleX(1.0315);transform-origin:0 0;">03:51 pm</div><div class="t" style="left:673.00px;top:636.00px;font-size:11.5px;line-height:11.5px;color:#1a1a1a;font-weight:normal;transform:scaleX(0.9200);transform-origin:0 0;">NA</div><div class="t" style="left:894.00px;top:636.00px;font-size:11.5px;line-height:11.5px;color:#1a1a1a;font-weight:normal;transform:scaleX(0.9200);transform-origin:0 0;">NA</div><div class="t" style="left:1346.00px;top:637.00px;font-size:9.5px;line-height:9.5px;color:#22b33f;font-weight:normal;transform:scaleX(0.9693);transform-origin:0 0;">Active</div><div class="t" style="left:680.00px;top:352.00px;font-size:9.5px;line-height:9.5px;color:#333333;font-weight:normal;transform:scaleX(0.8726);transform-origin:0 0;">MCA</div><div class="t" style="left:900.55px;top:352.00px;font-size:9.5px;line-height:9.5px;color:#333333;font-weight:normal;transform:scaleX(0.9934);transform-origin:0 0;">Staff_complete</div><div class="t" style="left:981.50px;top:352.00px;font-size:9.5px;line-height:9.5px;color:#333333;font-weight:normal;transform:scaleX(0.9779);transform-origin:0 0;">Photo</div><div class="t" style="left:1026.40px;top:352.00px;font-size:9.5px;line-height:9.5px;color:#22b33f;font-weight:normal;transform:scaleX(1.0429);transform-origin:0 0;">+6</div><div class="t" style="left:1394.00px;top:687.00px;font-size:12px;line-height:12px;color:#b3b3b3;font-weight:normal;transform:scaleX(0.8776);transform-origin:0 0;">25</div><div class="t" style="left:1499.50px;top:688.00px;font-size:12px;line-height:12px;color:#ffffff;font-weight:normal;transform:scaleX(0.5714);transform-origin:0 0;">1</div><div class="t" style="left:1528.50px;top:688.00px;font-size:12px;line-height:12px;color:#222222;font-weight:normal;transform:scaleX(0.8571);transform-origin:0 0;">2</div><div class="t" style="left:1604.72px;top:28.00px;font-size:17px;line-height:17px;color:#1d2b24;font-weight:normal;transform:scaleX(1.0764);transform-origin:0 0;-webkit-text-stroke:0.58px #1d2b24;">Filters</div><div class="t" style="left:1605.30px;top:75.00px;font-size:11px;line-height:11px;color:#264a37;font-weight:normal;transform:scaleX(1.0258);transform-origin:0 0;-webkit-text-stroke:0.37px #264a37;">Contact Name</div><div class="t" style="left:1605.30px;top:168.00px;font-size:11px;line-height:11px;color:#264a37;font-weight:normal;transform:scaleX(1.0611);transform-origin:0 0;-webkit-text-stroke:0.37px #264a37;">Mobile Number</div><div class="t" style="left:1605.30px;top:281.00px;font-size:11px;line-height:11px;color:#264a37;font-weight:normal;transform:scaleX(1.0577);transform-origin:0 0;-webkit-text-stroke:0.37px #264a37;">Contact Attributes</div><div class="t" style="left:1605.30px;top:413.00px;font-size:11px;line-height:11px;color:#264a37;font-weight:normal;transform:scaleX(0.9690);transform-origin:0 0;-webkit-text-stroke:0.37px #264a37;">Tags</div><div class="t" style="left:1605.30px;top:502.00px;font-size:11px;line-height:11px;color:#264a37;font-weight:normal;transform:scaleX(1.0045);transform-origin:0 0;-webkit-text-stroke:0.37px #264a37;">Created On</div><div class="t" style="left:1605.30px;top:594.00px;font-size:11px;line-height:11px;color:#264a37;font-weight:normal;transform:scaleX(1.0415);transform-origin:0 0;-webkit-text-stroke:0.37px #264a37;">Status</div><div class="t" style="left:1605.30px;top:656.00px;font-size:11px;line-height:11px;color:#264a37;font-weight:normal;transform:scaleX(1.0436);transform-origin:0 0;-webkit-text-stroke:0.37px #264a37;">Contact Source</div><div class="t" style="left:1605.30px;top:718.00px;font-size:11px;line-height:11px;color:#264a37;font-weight:normal;transform:scaleX(1.0196);transform-origin:0 0;-webkit-text-stroke:0.37px #264a37;">Opt Status</div><div class="t" style="left:1637.70px;top:109.00px;font-size:11px;line-height:11px;color:#b8b8b8;font-weight:normal;">Contact Name</div><div class="t" style="left:1637.70px;top:202.00px;font-size:11px;line-height:11px;color:#b8b8b8;font-weight:normal;transform:scaleX(1.0278);transform-origin:0 0;">Mobile Number</div><div class="t" style="left:1848.80px;top:282.00px;font-size:11px;line-height:11px;color:#10b43d;font-weight:bold;transform:scaleX(0.9230);transform-origin:0 0;">Add Row</div><div class="t" style="left:1621.70px;top:333.00px;font-size:11px;line-height:11px;color:#b8b8b8;font-weight:normal;transform:scaleX(1.0070);transform-origin:0 0;">Select Attribute</div><div class="t" style="left:1780.70px;top:333.00px;font-size:11px;line-height:11px;color:#d3d3d3;font-weight:normal;transform:scaleX(0.9535);transform-origin:0 0;">Select Value</div><div class="t" style="left:1615.60px;top:445.00px;font-size:11px;line-height:11px;color:#b8b8b8;font-weight:normal;transform:scaleX(0.9562);transform-origin:0 0;">Select Tag</div><div class="t" style="left:1615.00px;top:532.00px;font-size:8.5px;line-height:8.5px;color:#555555;font-weight:normal;transform:scaleX(1.0886);transform-origin:0 0;">From Date</div><div class="t" style="left:1615.00px;top:546.00px;font-size:11px;line-height:11px;color:#b0b0b0;font-weight:normal;transform:scaleX(0.9454);transform-origin:0 0;">mm / dd / yyyy</div><div class="t" style="left:1771.00px;top:532.00px;font-size:8.5px;line-height:8.5px;color:#555555;font-weight:normal;transform:scaleX(1.0992);transform-origin:0 0;">To Date</div><div class="t" style="left:1771.00px;top:546.00px;font-size:11px;line-height:11px;color:#b0b0b0;font-weight:normal;transform:scaleX(0.9454);transform-origin:0 0;">mm / dd / yyyy</div><div class="t" style="left:1626.00px;top:615.00px;font-size:11px;line-height:11px;color:#333333;font-weight:normal;transform:scaleX(0.9720);transform-origin:0 0;">Active</div><div class="t" style="left:1690.00px;top:615.00px;font-size:11px;line-height:11px;color:#333333;font-weight:normal;transform:scaleX(0.9840);transform-origin:0 0;">Disabled</div><div class="t" style="left:1624.94px;top:677.00px;font-size:11px;line-height:11px;color:#333333;font-weight:normal;transform:scaleX(1.0640);transform-origin:0 0;">Imported</div><div class="t" style="left:1706.00px;top:677.00px;font-size:11px;line-height:11px;color:#333333;font-weight:normal;transform:scaleX(1.0243);transform-origin:0 0;">Manual</div><div class="t" style="left:1777.80px;top:677.00px;font-size:11px;line-height:11px;color:#333333;font-weight:normal;transform:scaleX(0.9637);transform-origin:0 0;">Organic</div><div class="t" style="left:1626.00px;top:739.00px;font-size:11px;line-height:11px;color:#333333;font-weight:normal;transform:scaleX(1.0220);transform-origin:0 0;">Opt In</div><div class="t" style="left:1691.00px;top:739.00px;font-size:11px;line-height:11px;color:#333333;font-weight:normal;transform:scaleX(1.0140);transform-origin:0 0;">Opt Out</div><div class="t" style="left:1658.30px;top:837.00px;font-size:11.5px;line-height:11.5px;color:#333333;font-weight:normal;transform:scaleX(0.9184);transform-origin:0 0;">Clear All</div><div class="t" style="left:1818.10px;top:837.00px;font-size:11.5px;line-height:11.5px;color:#ffffff;font-weight:normal;transform:scaleX(0.9581);transform-origin:0 0;">Apply</div>
<svg style="position:absolute;left:1750px;top:815px;overflow:visible;" width="60" height="57" viewBox="0 0 60 57"><path d="M38.2 20.6 L6.5 33.7 L15.6 38.3 L21.6 44.3 L26.8 51.6 Z" fill="#000" stroke="#000" stroke-width="1.2" stroke-linejoin="round"/>
<path d="M19.5 40.5 L9.4 50.8" stroke="#000" stroke-width="6" stroke-linecap="round"/>
<g stroke="#000" stroke-width="3.6" stroke-linecap="round">
<path d="M30 7.2 L31.7 13.1 M41.8 7.5 L39.2 13.4 M19.6 15.2 L24.9 18.2 M45.1 19.3 L51.3 16.5 M45.4 27.2 L51.8 29.1 M40.9 33.6 L43.9 38.7"/>
</g></svg>
</body></html>
